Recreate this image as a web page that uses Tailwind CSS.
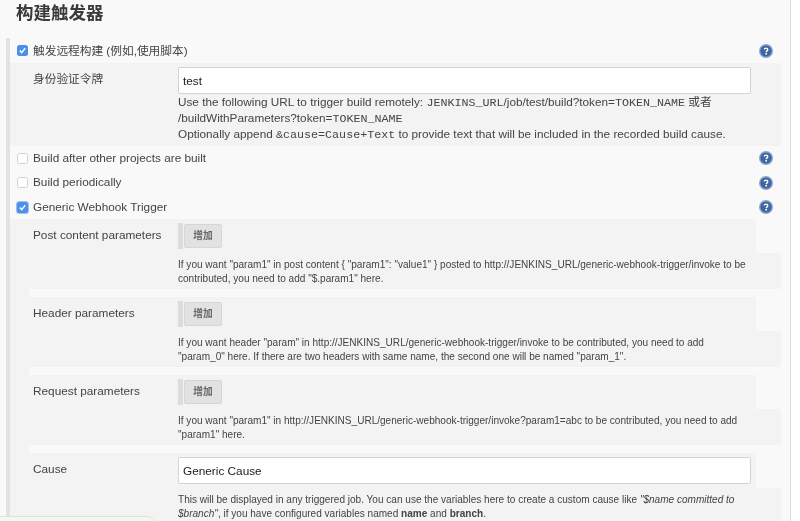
<!DOCTYPE html>
<html>
<head>
<meta charset="utf-8">
<script src="https://cdn.jsdelivr.net/npm/@tailwindcss/browser@4"></script>
</head>
<body class="bg-white">
<div class="relative w-[800px] h-[521px] overflow-hidden bg-white font-['Liberation_Sans','Noto_Sans_CJK_SC',sans-serif] text-[#444]">
  <div class="w-[791px] h-[521px] border-r border-[#dcdcdc] bg-[#f9f9f9] overflow-hidden blur-[0.6px]">
    <h2 class="h-[38px] pl-4 pt-[1px] text-[17.5px] leading-[24px] font-bold text-[#3a3a3a]">构建触发器</h2>
    <div class="ml-[6px] h-[483px] w-[775px] border-l-4 border-[#e2e2e2]">
      <!-- row 1 -->
      <div class="h-[25px] flex items-center pl-[7px] pr-[8px] text-[11.7px]">
        <span class="w-[11px] h-[11px] rounded-[2.5px] bg-[#4d90ea] flex items-center justify-center"><svg viewBox="0 0 11 11" class="w-[11px] h-[11px]"><path d="M2.8 5.6 4.7 7.6 8.2 3.3" fill="none" stroke="#fff" stroke-width="1.4"/></svg></span>
        <span class="ml-[5px] pt-[1px]">触发远程构建 (例如,使用脚本)</span>
        <svg viewBox="0 0 14 14" class="w-[14px] h-[14px] ml-auto"><circle cx="7" cy="7" r="7" fill="#8aa3cd"/><circle cx="7" cy="7" r="5.6" fill="#3f659f"/><path d="M5.3 5.6C5.3 3.6 8.8 3.6 8.8 5.6 8.8 6.9 7.2 6.8 7.2 8.2" fill="none" stroke="#fff" stroke-width="1.4"/><rect x="6.4" y="9" width="1.6" height="1.6" fill="#fff"/></svg>
      </div>
      <!-- token -->
      <div class="h-[83px] bg-[#f3f3f3] flex pt-[4px]">
        <div class="w-[168px] pl-[23px] pt-[2px] text-[11.7px] leading-[20px]">身份验证令牌</div>
        <div class="w-[573px]">
          <div class="h-[27px] w-[573px] rounded-[2px] border border-[#d4d4d4] bg-white pl-[4px] text-[11.8px] leading-[26px] text-[#222]">test</div>
          <div class="w-[590px] text-[11.76px] leading-[16px] whitespace-nowrap text-[#444]">
            <div class="h-[16px]">Use the following URL to trigger build remotely: <span class="font-['Liberation_Mono'] text-[11.7px]">JENKINS_URL</span>/job/test/build?token=<span class="font-['Liberation_Mono'] text-[11.7px]">TOKEN_NAME</span> 或者</div>
            <div class="h-[16px]">/buildWithParameters?token=<span class="font-['Liberation_Mono'] text-[11.7px]">TOKEN_NAME</span></div>
            <div class="h-[16px]">Optionally append <span class="font-['Liberation_Mono'] text-[11.7px]">&amp;cause=Cause+Text</span> to provide text that will be included in the recorded build cause.</div>
          </div>
        </div>
      </div>
      <!-- checks -->
      <div class="h-[24px] flex items-center pl-[7px] pr-[8px] text-[11.8px]">
        <span class="w-[11px] h-[11px] rounded-[2.5px] bg-white border border-[#d2d2d2]"></span>
        <span class="ml-[5px] pt-[1px]">Build after other projects are built</span>
        <svg viewBox="0 0 14 14" class="w-[14px] h-[14px] ml-auto"><circle cx="7" cy="7" r="7" fill="#8aa3cd"/><circle cx="7" cy="7" r="5.6" fill="#3f659f"/><path d="M5.3 5.6C5.3 3.6 8.8 3.6 8.8 5.6 8.8 6.9 7.2 6.8 7.2 8.2" fill="none" stroke="#fff" stroke-width="1.4"/><rect x="6.4" y="9" width="1.6" height="1.6" fill="#fff"/></svg>
      </div>
      <div class="h-[25px] flex items-center pl-[7px] pr-[8px] text-[11.8px]">
        <span class="w-[11px] h-[11px] rounded-[2.5px] bg-white border border-[#d2d2d2]"></span>
        <span class="ml-[5px] pt-[1px]">Build periodically</span>
        <svg viewBox="0 0 14 14" class="w-[14px] h-[14px] ml-auto"><circle cx="7" cy="7" r="7" fill="#8aa3cd"/><circle cx="7" cy="7" r="5.6" fill="#3f659f"/><path d="M5.3 5.6C5.3 3.6 8.8 3.6 8.8 5.6 8.8 6.9 7.2 6.8 7.2 8.2" fill="none" stroke="#fff" stroke-width="1.4"/><rect x="6.4" y="9" width="1.6" height="1.6" fill="#fff"/></svg>
      </div>
      <div class="h-[24px] flex items-center pl-[7px] pr-[8px] text-[11.8px]">
        <span class="w-[11px] h-[11px] rounded-[2.5px] bg-[#4d90ea] flex items-center justify-center shadow-[0_0_0_1px_#9cc0f2]"><svg viewBox="0 0 11 11" class="w-[11px] h-[11px]"><path d="M2.8 5.6 4.7 7.6 8.2 3.3" fill="none" stroke="#fff" stroke-width="1.4"/></svg></span>
        <span class="ml-[5px] pt-[1px]">Generic Webhook Trigger</span>
        <svg viewBox="0 0 14 14" class="w-[14px] h-[14px] ml-auto"><circle cx="7" cy="7" r="7" fill="#8aa3cd"/><circle cx="7" cy="7" r="5.6" fill="#3f659f"/><path d="M5.3 5.6C5.3 3.6 8.8 3.6 8.8 5.6 8.8 6.9 7.2 6.8 7.2 8.2" fill="none" stroke="#fff" stroke-width="1.4"/><rect x="6.4" y="9" width="1.6" height="1.6" fill="#fff"/></svg>
      </div>
      <!-- nested -->
      <div class="border-l-[19px] border-[#f3f3f3] text-[10.05px] leading-[13.5px] text-[#444] whitespace-nowrap">
        <div class="w-[727px] h-[34px] bg-[#f3f3f3] flex pt-[4px]">
          <div class="w-[149px] pl-[4px] text-[11.8px] leading-[24px]">Post content parameters</div>
          <div class="flex border-l-[5px] border-[#dcdcdc] h-[26px]"><span class="ml-[1px] mt-[1px] w-[38px] h-[24px] rounded-[2px] bg-[#e2e2e2] border border-[#d6d6d6] text-center text-[9.7px] leading-[22px] font-bold text-[#666]">增加</span></div>
        </div>
        <div class="w-[752px] h-[36px] bg-[#f3f3f3] pl-[149px] pt-[5px]">If you want "param1" in post content { "param1": "value1" } posted to http://JENKINS_URL/generic-webhook-trigger/invoke to be<br>contributed, you need to add "$.param1" here.</div>
        <div class="h-[8px] bg-[#f9f9f9] w-[752px]"></div>
        <div class="w-[727px] h-[34px] bg-[#f3f3f3] flex pt-[4px]">
          <div class="w-[149px] pl-[4px] text-[11.8px] leading-[24px]">Header parameters</div>
          <div class="flex border-l-[5px] border-[#dcdcdc] h-[26px]"><span class="ml-[1px] mt-[1px] w-[38px] h-[24px] rounded-[2px] bg-[#e2e2e2] border border-[#d6d6d6] text-center text-[9.7px] leading-[22px] font-bold text-[#666]">增加</span></div>
        </div>
        <div class="w-[752px] h-[36px] bg-[#f3f3f3] pl-[149px] pt-[5px]">If you want header "param" in http://JENKINS_URL/generic-webhook-trigger/invoke to be contributed, you need to add<br>"param_0" here. If there are two headers with same name, the second one will be named "param_1".</div>
        <div class="h-[8px] bg-[#f9f9f9] w-[752px]"></div>
        <div class="w-[727px] h-[34px] bg-[#f3f3f3] flex pt-[4px]">
          <div class="w-[149px] pl-[4px] text-[11.8px] leading-[24px]">Request parameters</div>
          <div class="flex border-l-[5px] border-[#dcdcdc] h-[26px]"><span class="ml-[1px] mt-[1px] w-[38px] h-[24px] rounded-[2px] bg-[#e2e2e2] border border-[#d6d6d6] text-center text-[9.7px] leading-[22px] font-bold text-[#666]">增加</span></div>
        </div>
        <div class="w-[752px] h-[36px] bg-[#f3f3f3] pl-[149px] pt-[5px]">If you want "param1" in http://JENKINS_URL/generic-webhook-trigger/invoke?param1=abc to be contributed, you need to add<br>"param1" here.</div>
        <div class="h-[8px] bg-[#f9f9f9] w-[752px]"></div>
        <div class="w-[727px] h-[35px] bg-[#f3f3f3] flex pt-[4px]">
          <div class="w-[149px] pl-[4px] text-[11.8px] leading-[24px]">Cause</div>
          <div class="h-[27px] w-[573px] rounded-[2px] border border-[#d4d4d4] bg-white pl-[4px] text-[11.8px] leading-[26px] text-[#222]">Generic Cause</div>
        </div>
        <div class="w-[752px] h-[35px] bg-[#f3f3f3] pl-[149px] pt-[5px]">This will be displayed in any triggered job. You can use the variables here to create a custom cause like <em>"$name committed to<br>$branch"</em>, if you have configured variables named <b>name</b> and <b>branch</b>.</div>
      </div>
    </div>
  </div>
  <div class="absolute left-[-10px] top-[516px] w-[165px] h-[20px] rounded-t-[8px] border border-[#d8e8d8] bg-[#f2f8f1]"></div>
</div>
</body>
</html>
